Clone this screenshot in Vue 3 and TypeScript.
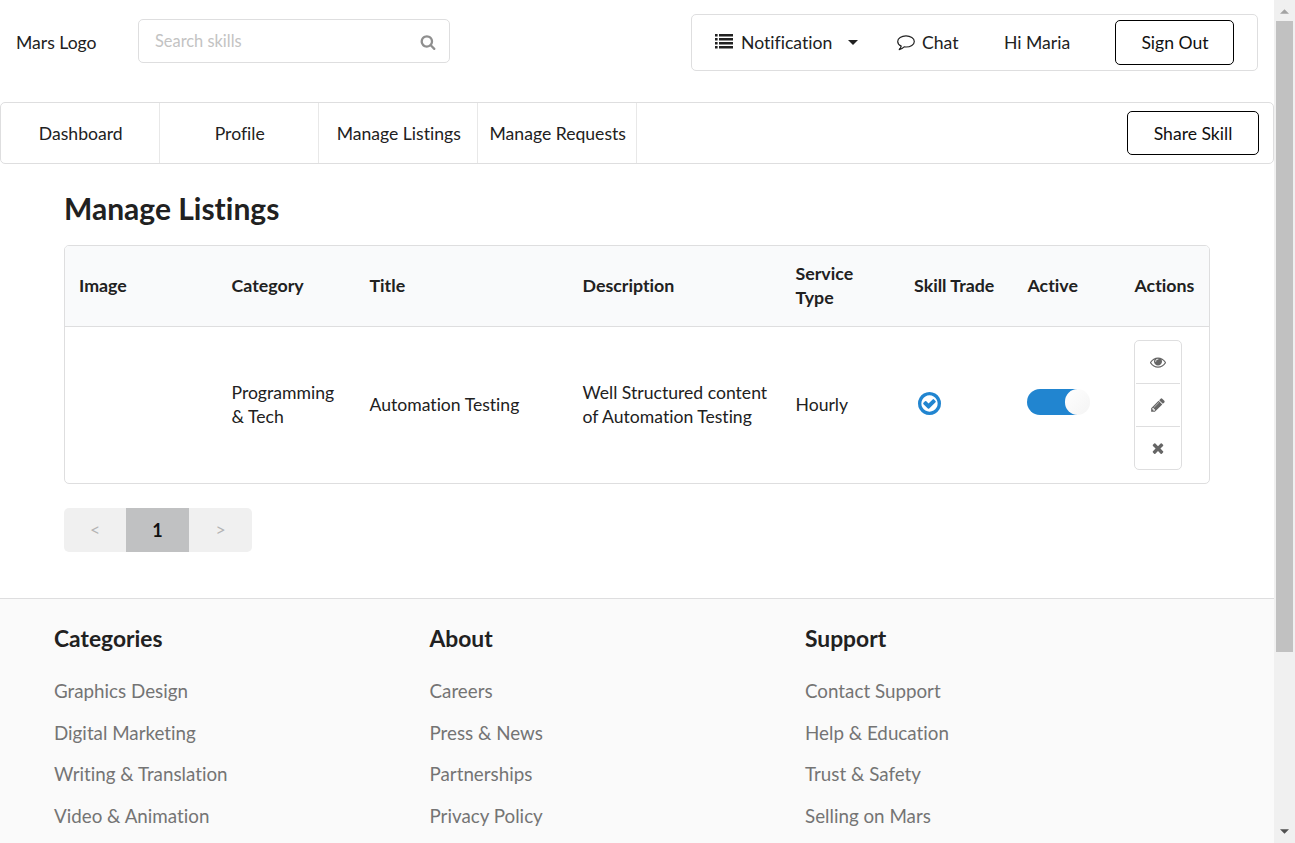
<script setup lang="ts">
interface FooterColumn {
  title: string
  links: string[]
}

const navItems: string[] = ['Dashboard', 'Profile', 'Manage Listings', 'Manage Requests']
const columns: string[] = ['Image', 'Category', 'Title', 'Description', 'Service Type', 'Skill Trade', 'Active', 'Actions']

const footer: FooterColumn[] = [
  { title: 'Categories', links: ['Graphics Design', 'Digital Marketing', 'Writing & Translation', 'Video & Animation'] },
  { title: 'About', links: ['Careers', 'Press & News', 'Partnerships', 'Privacy Policy'] },
  { title: 'Support', links: ['Contact Support', 'Help & Education', 'Trust & Safety', 'Selling on Mars'] },
]

const actionIcons: { name: string; path: string }[] = [
  {
    name: 'view',
    path: 'M1664 960q-152-236-381-353 61 104 61 225 0 185-131.5 316.5t-316.5 131.5-316.5-131.5-131.5-316.5q0-121 61-225-229 117-381 353 133 205 333.5 326.5t434.5 121.5 434.5-121.5 333.5-326.5zm-720-384q0-20-14-34t-34-14q-125 0-214.5 89.5t-89.5 214.5q0 20 14 34t34 14 34-14 14-34q0-86 61-147t147-61q20 0 34-14t14-34zm848 384q0 34-20 69-140 230-376.5 368.5t-499.5 138.5-499.5-139-376.5-368q-20-35-20-69t20-69q140-229 376.5-368t499.5-139 499.5 139 376.5 368q20 35 20 69z',
  },
  {
    name: 'edit',
    path: 'M491 1536l91-91-235-235-91 91v107h128v128h107zm523-928q0-22-22-22-10 0-17 7l-542 542q-7 7-7 17 0 22 22 22 10 0 17-7l542-542q7-7 7-17zm-54-192l416 416-832 832h-416v-416zm683 96q0 53-37 90l-166 166-416-416 166-165q36-38 90-38 53 0 91 38l235 234q37 39 37 91z',
  },
  {
    name: 'remove',
    path: 'M1490 1322q0 40-28 68l-136 136q-28 28-68 28t-68-28l-294-294-294 294q-28 28-68 28t-68-28l-136-136q-28-28-28-68t28-68l294-294-294-294q-28-28-28-68t28-68l136-136q28-28 68-28t68 28l294 294 294-294q28-28 68-28t68 28l136 136q28 28 28 68t-28 68l-294 294 294 294q28 28 28 68z',
  },
]
</script>

<template>
  <div class="window">
    <div class="page">
      <header class="top">
        <span class="logo">Mars Logo</span>
        <div class="search">
          <input class="search-input" type="text" placeholder="Search skills" />
          <svg class="search-icon" viewBox="0 0 1792 1792"><path d="M1216 832q0-185-131.5-316.5t-316.5-131.5-316.5 131.5-131.5 316.5 131.5 316.5 316.5 131.5 316.5-131.5 131.5-316.5zm512 832q0 52-38 90t-90 38q-54 0-90-38l-343-342q-179 124-399 124-143 0-273.5-55.5t-225-150-150-225-55.5-273.5 55.5-273.5 150-225 225-150 273.5-55.5 273.5 55.5 225 150 150 225 55.5 273.5q0 220-124 399l343 343q37 37 37 90z" /></svg>
        </div>
        <div class="account">
          <svg class="list-icon" viewBox="0 0 18 15">
            <path d="M0 0h2.6v2.4H0zM0 4h2.6v2.4H0zM0 8h2.6v2.4H0zM0 12h2.6v2.4H0zM4 0h14v2.6H4zM4 4h14v2.6H4zM4 8h14v2.6H4zM4 12h14v2.6H4z" />
          </svg>
          <span class="notification">Notification</span>
          <svg class="caret" viewBox="0 0 10 5"><path d="M0 0h10L5 5z" /></svg>
          <svg class="chat-icon" viewBox="0 0 18 16"><path d="M9 .8C4.500.8.700 3.200.700 6.400c0 2 1.400 3.700 3.500 4.700-.3 1.400-1 2.600-2 3.500 2-.4 3.700-1.300 5-2.700.6.1 1.200.1 1.800.1 4.500 0 8.300-2.400 8.300-5.600S13.500.8 9 .8z" /></svg>
          <span class="chat">Chat</span>
          <span class="greeting">Hi Maria</span>
          <button class="outline-button sign-out">Sign Out</button>
        </div>
      </header>

      <nav class="nav">
        <a v-for="item in navItems" :key="item" class="nav-item">{{ item }}</a>
        <button class="outline-button share">Share Skill</button>
      </nav>

      <main class="main">
        <h2 class="title">Manage Listings</h2>
        <div class="table">
          <div class="row head">
            <div v-for="column in columns" :key="column" class="cell">{{ column }}</div>
          </div>
          <div class="row body">
            <div class="cell"></div>
            <div class="cell">Programming &amp; Tech</div>
            <div class="cell">Automation Testing</div>
            <div class="cell">Well Structured content of Automation Testing</div>
            <div class="cell">Hourly</div>
            <div class="cell">
              <svg class="check" viewBox="128 128 1536 1536"><path d="M1299 813l-422 422q-19 19-45 19t-45-19l-294-294q-19-19-19-45t19-45l102-102q19-19 45-19t45 19l147 147 275-275q19-19 45-19t45 19l102 102q19 19 19 45t-19 45zm141 83q0-148-73-273t-198-198-273-73-273 73-198 198-73 273 73 273 198 198 273 73 273-73 198-198 73-273zm224 0q0 209-103 385.5t-279.5 279.5-385.5 103-385.5-103-279.5-279.5-103-385.5 103-385.5 279.5-279.5 385.5-103 385.5 103 279.5 279.5 103 385.5z" /></svg>
            </div>
            <div class="cell"><span class="toggle"><span class="knob"></span></span></div>
            <div class="cell">
              <div class="actions">
                <button v-for="icon in actionIcons" :key="icon.name" class="action">
                  <svg class="action-icon" :class="icon.name" viewBox="0 0 1792 1792"><path :d="icon.path" /></svg>
                </button>
              </div>
            </div>
          </div>
        </div>
        <div class="pagination">
          <button class="page-button">&lt;</button>
          <button class="page-button current">1</button>
          <button class="page-button">&gt;</button>
        </div>
      </main>

      <footer class="footer">
        <section v-for="column in footer" :key="column.title" class="footer-column">
          <h3 class="footer-title">{{ column.title }}</h3>
          <a v-for="link in column.links" :key="link" class="footer-link">{{ link }}</a>
        </section>
      </footer>
    </div>

    <div class="scrollbar">
      <svg class="arrow up" viewBox="0 0 10 5"><path d="M0 5h10L5 0z" /></svg>
      <div class="thumb"></div>
      <svg class="arrow down" viewBox="0 0 10 5"><path d="M0 0h10L5 5z" /></svg>
    </div>
  </div>
</template>

<style>
body {
  margin: 0;
  overflow: hidden;
}
</style>

<style scoped>
.window,
.window * {
  box-sizing: border-box;
}
.window {
  display: flex;
  width: 1295px;
  height: 843px;
  overflow: hidden;
  background: #fff;
  color: #212121;
  font-family: Lato, sans-serif;
  font-size: 17.6px;
  line-height: 24px;
  font-variant-ligatures: none;
}
svg {
  display: block;
  flex: none;
  fill: currentColor;
}
button,
input {
  font: inherit;
}
.page {
  display: flex;
  flex-direction: column;
  width: 1274px;
  flex: none;
}
.top {
  display: flex;
  align-items: flex-start;
  height: 102px;
  padding: 14px 16px 0;
}
.logo {
  width: 122px;
  margin-top: 17px;
}
.search {
  display: flex;
  align-items: center;
  width: 312px;
  height: 44px;
  margin-top: 5px;
  padding: 0 13px 0 16px;
  border: 1px solid #dededf;
  border-radius: 5px;
}
.search-input {
  flex: 1;
  min-width: 0;
  padding: 0;
  border: 0;
  outline: 0;
  background: transparent;
  font-size: 16.4px;
}
.search-input::placeholder {
  color: #c3c3c3;
  opacity: 1;
}
.search-icon {
  width: 16px;
  height: 16px;
  margin-top: 2px;
  color: #8f8f8f;
}
.account {
  display: flex;
  align-items: center;
  width: 567px;
  height: 57px;
  margin-left: auto;
  padding-left: 23px;
  border: 1px solid #dededf;
  border-radius: 5px;
}
.account > span {
  padding-top: 1px;
}
.list-icon {
  width: 18px;
  height: 15px;
  margin-top: -2px;
}
.notification {
  width: 98px;
  margin-left: 8px;
}
.caret {
  width: 10px;
  height: 5px;
  margin-left: 9px;
}
.chat-icon {
  width: 18px;
  height: 16px;
  margin-left: 38.5px;
  fill: none;
  stroke: currentColor;
  stroke-width: 1.2;
  stroke-linejoin: round;
}
.chat {
  width: 82px;
  margin-left: 7.5px;
}
.greeting {
  width: 111px;
}
.outline-button {
  padding: 0;
  border: 1px solid #000;
  border-radius: 5px;
  background: #fff;
  color: #111;
}
.sign-out {
  width: 119px;
  height: 45px;
  padding: 1px 0 0 1px;
}
.nav {
  display: flex;
  align-items: center;
  height: 62px;
  border: 1px solid #dededf;
  border-radius: 5px;
}
.nav-item {
  display: flex;
  align-items: center;
  justify-content: center;
  width: 159px;
  height: 60px;
  padding: 2px 0 0 1.5px;
  border-right: 1px solid #e8e8e8;
  white-space: nowrap;
}
.share {
  width: 132px;
  height: 44px;
  margin: 0 14px 0 auto;
  padding-top: 2px;
}
.main {
  height: 434px;
  padding: 26px 64px 0;
}
.title {
  margin: 0 0 19px;
  font-size: 30px;
  line-height: 36px;
  font-weight: 700;
}
.table {
  width: 1146px;
  border: 1px solid #dededf;
  border-radius: 5px;
  overflow: hidden;
}
.row {
  display: grid;
  grid-template-columns: 152.5px 138px 213px 213px 118.5px 113.5px 107px 1fr;
  align-items: center;
}
.head {
  height: 81px;
  padding-bottom: 2px;
  background: #f9fafb;
  border-bottom: 1px solid #dededf;
  font-size: 17.8px;
  font-weight: 700;
}
.body {
  height: 156px;
  padding-bottom: 1px;
}
.cell {
  padding: 0 14px;
}
.cell:nth-child(n + 6) {
  padding-right: 0;
}
.check {
  width: 23px;
  height: 23px;
  margin: -3px 0 0 4px;
  color: #2185d0;
}
.toggle {
  display: flex;
  justify-content: flex-end;
  width: 63px;
  height: 26px;
  margin: -5px 0 0 -1px;
  border-radius: 13px;
  background: linear-gradient(90deg, #2185d0 50px, #fff 50px);
}
.knob {
  width: 25px;
  height: 26px;
  border-radius: 13px;
  background: linear-gradient(135deg, #fff, #f4f4f4);
}
.actions {
  width: 48px;
  height: 130px;
  margin: 1px 0 0 -1px;
  padding: 0 1px;
  border: 1px solid #dededf;
  border-radius: 5px;
}
.action {
  display: flex;
  align-items: center;
  justify-content: center;
  width: 100%;
  height: 43px;
  padding: 0;
  border: 0;
  border-bottom: 1px solid #dededf;
  background: transparent;
  color: #666;
}
.action:last-child {
  height: 42px;
  border-bottom: 0;
}
.action-icon {
  width: 16px;
  height: 16px;
}
.pagination {
  display: flex;
  width: 188px;
  height: 44px;
  margin-top: 24px;
  border-radius: 5px;
  overflow: hidden;
}
.page-button {
  width: 63px;
  padding: 0;
  border: 0;
  background: #f0f0f0;
  color: #b4b4b4;
  font-size: 17.6px;
}
.page-button:first-child {
  width: 62px;
}
.page-button.current {
  background: #c0c1c2;
  color: #111;
  font-size: 18px;
  font-weight: 700;
}
.footer {
  display: grid;
  grid-template-columns: 375.5px 375.5px 1fr;
  height: 245px;
  padding: 25px 0 0 54px;
  border-top: 1px solid #dededf;
  background: #fafafa;
}
.footer-column {
  display: flex;
  flex-direction: column;
}
.footer-title {
  margin: 0 0 27px;
  font-size: 22.8px;
  line-height: 28px;
  font-weight: 700;
}
.footer-link {
  height: 41.6px;
  color: #747474;
  font-size: 18.8px;
}
.scrollbar {
  display: flex;
  flex-direction: column;
  align-items: center;
  width: 21px;
  padding: 9px 0;
  background: #f0f0f0;
}
.thumb {
  width: 17px;
  height: 631px;
  margin-top: 7px;
  background: #c1c1c1;
}
.arrow {
  width: 9px;
  height: 5px;
}
.up {
  color: #a3a3a3;
}
.down {
  margin-top: auto;
  color: #505050;
}
</style>
